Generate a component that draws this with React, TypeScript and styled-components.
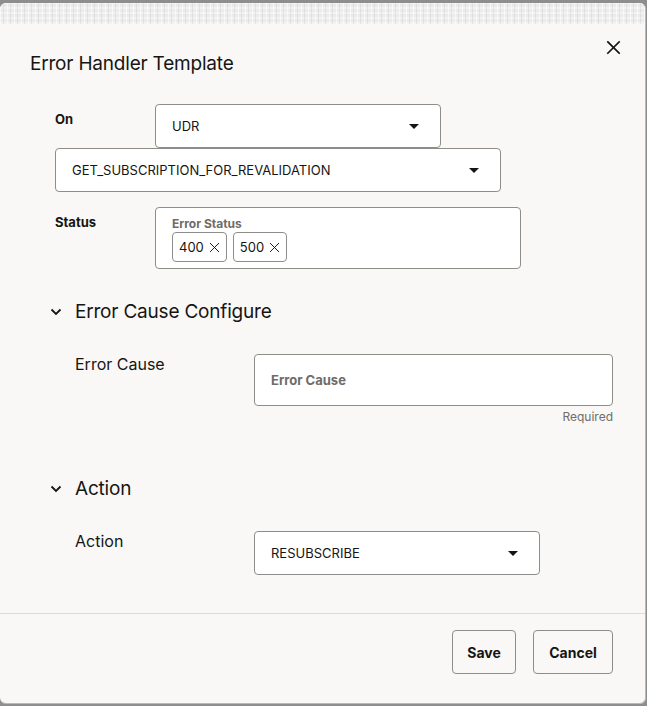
import React from "react";
import styled, { createGlobalStyle } from "styled-components";

const Global = createGlobalStyle`
  html, body { margin: 0; padding: 0; }
  body {
    background: #8e8e8e;
    font-family: Inter, "Noto Sans", sans-serif;
    color: #161513;
    width: 647px;
    height: 706px;
    overflow: hidden;
  }
`;

const Dialog = styled.div`
  margin-top: 3px;
  width: 645px;
  height: 700px;
  background: #f9f8f6;
  border-radius: 6px;
  border-right: 1px solid #b9b9b9;
  border-bottom: 1px solid #b9b9b9;
  overflow: hidden;
  display: flex;
  flex-direction: column;
`;

const Texture = styled.div`
  height: 21px;
  background-color: #ebebeb;
  background-image:
    repeating-linear-gradient(90deg, rgba(255,255,255,0.55) 0 1px, transparent 1px 3px, rgba(200,200,200,0.35) 3px 4px, transparent 4px 7px),
    repeating-linear-gradient(0deg, rgba(255,255,255,0.4) 0 2px, transparent 2px 5px);
`;

const Header = styled.div`
  display: flex;
  justify-content: space-between;
  align-items: flex-start;
  padding: 15px 24px 0 30px;
`;

const Title = styled.h1`
  margin: 13px 0 0;
  font-size: 19px;
  font-weight: 400;
  line-height: 24px;
  letter-spacing: -0.2px;
`;

const CloseButton = styled.button`
  border: none;
  background: transparent;
  padding: 0;
  width: 16px;
  height: 16px;
  display: flex;
  align-items: center;
  justify-content: center;
  cursor: pointer;
`;

const Body = styled.div`
  flex: 1;
  padding: 28px 0 0;
`;

const TopForm = styled.div`
  padding-left: 55px;
  display: flex;
  flex-direction: column;
`;

const FieldRow = styled.div<{ $mt?: number }>`
  display: flex;
  align-items: flex-start;
  margin-top: ${(p) => p.$mt ?? 0}px;
`;

const BoldLabel = styled.div`
  width: 100px;
  font-size: 13px;
  font-weight: 700;
  line-height: 16px;
  padding-top: 7px;
`;

const SelectBox = styled.div<{ $w: number; $h?: number }>`
  box-sizing: border-box;
  width: ${(p) => p.$w}px;
  height: ${(p) => p.$h ?? 44}px;
  background: #fff;
  border: 1px solid #8f8d8a;
  border-radius: 4px;
  display: flex;
  align-items: center;
  justify-content: space-between;
  padding: 0 21px 0 16px;
  font-size: 13px;
  color: #161513;
`;

const Caret = styled.span`
  width: 0;
  height: 0;
  border-left: 5px solid transparent;
  border-right: 5px solid transparent;
  border-top: 5px solid #161513;
`;

const TagBox = styled.div`
  box-sizing: border-box;
  width: 366px;
  height: 62px;
  background: #fff;
  border: 1px solid #8f8d8a;
  border-radius: 4px;
  padding: 9px 16px 0;
`;

const TagLabel = styled.div`
  font-size: 12px;
  font-weight: 700;
  color: #6f6c69;
  line-height: 14px;
`;

const Chips = styled.div`
  display: flex;
  gap: 6px;
  margin-top: 1px;
`;

const Chip = styled.div`
  box-sizing: border-box;
  height: 30px;
  border: 1px solid #8f8d8a;
  border-radius: 4px;
  padding: 0 6px;
  display: flex;
  align-items: center;
  gap: 5px;
  font-size: 13px;
  color: #161513;
`;

const Section = styled.section<{ $mt: number }>`
  margin-top: ${(p) => p.$mt}px;
  padding-left: 50px;
`;

const SectionHeader = styled.div`
  display: flex;
  align-items: center;
  gap: 13px;
  height: 24px;
`;

const SectionTitle = styled.h2`
  margin: 0;
  font-size: 19px;
  font-weight: 400;
  line-height: 24px;
  letter-spacing: -0.2px;
`;

const SectionRow = styled.div<{ $mt: number }>`
  display: grid;
  grid-template-columns: 179px auto;
  align-items: start;
  padding-left: 25px;
  margin-top: ${(p) => p.$mt}px;
`;

const RowLabel = styled.div`
  font-size: 16px;
  line-height: 20px;
`;

const InputCol = styled.div`
  display: flex;
  flex-direction: column;
  align-items: flex-end;
  width: 359px;
`;

const TextInput = styled.div`
  box-sizing: border-box;
  width: 359px;
  height: 52px;
  background: #fff;
  border: 1px solid #8f8d8a;
  border-radius: 4px;
  display: flex;
  align-items: center;
  padding-left: 16px;
  font-size: 13px;
  font-weight: 700;
  color: #6f6c69;
`;

const Hint = styled.div`
  font-size: 12px;
  color: #6f6c69;
  margin-top: 4px;
  line-height: 14px;
`;

const Footer = styled.div`
  border-top: 1px solid #dedcda;
  display: flex;
  justify-content: flex-end;
  gap: 17px;
  padding: 16px 32px 29px 0;
`;

const Button = styled.button<{ $w: number }>`
  box-sizing: border-box;
  width: ${(p) => p.$w}px;
  height: 44px;
  background: transparent;
  border: 1px solid #8f8d8a;
  border-radius: 4px;
  font-family: inherit;
  font-size: 14px;
  font-weight: 700;
  color: #161513;
  cursor: pointer;
`;

const XIcon = ({ size, stroke }: { size: number; stroke: number }) => (
  <svg width={size} height={size} viewBox="0 0 16 16" fill="none">
    <path d="M2 2L14 14M14 2L2 14" stroke="#161513" strokeWidth={stroke} strokeLinecap="square" />
  </svg>
);

const Chevron = () => (
  <svg width="12" height="8" viewBox="0 0 12 8" fill="none">
    <path d="M1.5 1.5L6 6L10.5 1.5" stroke="#161513" strokeWidth="1.8" />
  </svg>
);

export default function App() {
  return (
    <>
      <Global />
      <Dialog>
        <Texture />
        <Header>
          <Title>Error Handler Template</Title>
          <CloseButton aria-label="Close">
            <XIcon size={15} stroke={1.8} />
          </CloseButton>
        </Header>
        <Body>
          <TopForm>
            <FieldRow>
              <BoldLabel>On</BoldLabel>
              <SelectBox $w={286}>
                UDR
                <Caret />
              </SelectBox>
            </FieldRow>
            <FieldRow $mt={0}>
              <SelectBox $w={446}>
                GET_SUBSCRIPTION_FOR_REVALIDATION
                <Caret />
              </SelectBox>
            </FieldRow>
            <FieldRow $mt={15}>
              <BoldLabel>Status</BoldLabel>
              <TagBox>
                <TagLabel>Error Status</TagLabel>
                <Chips>
                  <Chip>
                    400 <XIcon size={11} stroke={1.4} />
                  </Chip>
                  <Chip>
                    500 <XIcon size={11} stroke={1.4} />
                  </Chip>
                </Chips>
              </TagBox>
            </FieldRow>
          </TopForm>

          <Section $mt={31}>
            <SectionHeader>
              <Chevron />
              <SectionTitle>Error Cause Configure</SectionTitle>
            </SectionHeader>
            <SectionRow $mt={30}>
              <RowLabel>Error Cause</RowLabel>
              <InputCol>
                <TextInput>Error Cause</TextInput>
                <Hint>Required</Hint>
              </InputCol>
            </SectionRow>
          </Section>

          <Section $mt={53}>
            <SectionHeader>
              <Chevron />
              <SectionTitle>Action</SectionTitle>
            </SectionHeader>
            <SectionRow $mt={30}>
              <RowLabel>Action</RowLabel>
              <SelectBox $w={286}>
                RESUBSCRIBE
                <Caret />
              </SelectBox>
            </SectionRow>
          </Section>
        </Body>
        <Footer>
          <Button $w={64}>Save</Button>
          <Button $w={80}>Cancel</Button>
        </Footer>
      </Dialog>
    </>
  );
}
